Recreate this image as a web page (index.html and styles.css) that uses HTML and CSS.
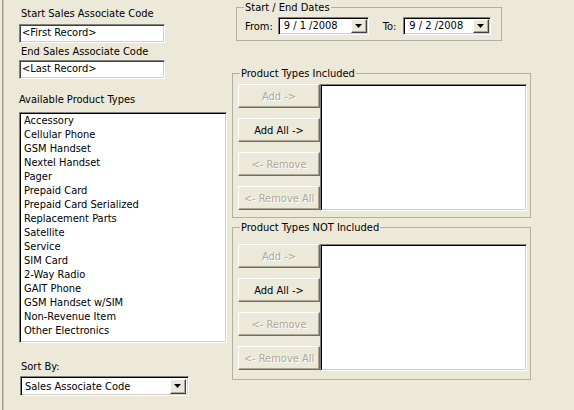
FILE: index.html
```html
<!DOCTYPE html>
<html>
<head>
<meta charset="utf-8">
<link rel="stylesheet" href="styles.css">
</head>
<body>
<div class="window">
  <div class="left">
    <div class="label l1">Start Sales Associate Code</div>
    <div class="textbox t1">&lt;First Record&gt;</div>
    <div class="label l2">End Sales Associate Code</div>
    <div class="textbox t2">&lt;Last Record&gt;</div>
    <div class="label l3">Available Product Types</div>
    <div class="listbox avail">
      <div class="item">Accessory</div>
      <div class="item">Cellular Phone</div>
      <div class="item">GSM Handset</div>
      <div class="item">Nextel Handset</div>
      <div class="item">Pager</div>
      <div class="item">Prepaid Card</div>
      <div class="item">Prepaid Card Serialized</div>
      <div class="item">Replacement Parts</div>
      <div class="item">Satellite</div>
      <div class="item">Service</div>
      <div class="item">SIM Card</div>
      <div class="item">2-Way Radio</div>
      <div class="item">GAIT Phone</div>
      <div class="item">GSM Handset w/SIM</div>
      <div class="item">Non-Revenue Item</div>
      <div class="item">Other Electronics</div>
    </div>
    <div class="label l4">Sort By:</div>
    <div class="combo sort">
      <span class="val">Sales Associate Code</span>
      <span class="dd"><svg width="7" height="4" viewBox="0 0 7 4"><path d="M0 0H7L3.5 4Z" fill="#000"/></svg></span>
    </div>
  </div>
  <div class="right">
    <fieldset class="group dates">
      <legend>Start / End Dates</legend>
      <div class="daterow">
        <span class="dlabel from">From:</span>
        <div class="combo date d1">
          <span class="val">9 / 1 /2008</span>
          <span class="dd"><svg width="7" height="4" viewBox="0 0 7 4"><path d="M0 0H7L3.5 4Z" fill="#000"/></svg></span>
        </div>
        <span class="dlabel to">To:</span>
        <div class="combo date d2">
          <span class="val">9 / 2 /2008</span>
          <span class="dd"><svg width="7" height="4" viewBox="0 0 7 4"><path d="M0 0H7L3.5 4Z" fill="#000"/></svg></span>
        </div>
      </div>
    </fieldset>
    <fieldset class="group types inc">
      <legend>Product Types Included</legend>
      <div class="typesrow">
        <div class="buttons">
          <div class="btn disabled">Add -&gt;</div>
          <div class="btn">Add All -&gt;</div>
          <div class="btn disabled">&lt;- Remove</div>
          <div class="btn disabled">&lt;- Remove All</div>
        </div>
        <div class="listbox side"></div>
      </div>
    </fieldset>
    <fieldset class="group types exc">
      <legend>Product Types NOT Included</legend>
      <div class="typesrow">
        <div class="buttons">
          <div class="btn disabled">Add -&gt;</div>
          <div class="btn">Add All -&gt;</div>
          <div class="btn disabled">&lt;- Remove</div>
          <div class="btn disabled">&lt;- Remove All</div>
        </div>
        <div class="listbox side"></div>
      </div>
    </fieldset>
  </div>
</div>
</body>
</html>
```

FILE: styles.css
```css
html, body {
  margin: 0;
  padding: 0;
}
body {
  background: #ece9d8;
  width: 574px;
  height: 410px;
  overflow: hidden;
  font-family: "DejaVu Sans Condensed", "DejaVu Sans", sans-serif;
  font-stretch: condensed;
  font-size: 11px;
  color: #000;
}
.window {
  display: flex;
  height: 410px;
  margin-left: 2px;
  border-left: 1px solid #9c9a8c;
  box-shadow: inset 1px 0 0 #c8c6b8;
}
.left {
  width: 213px;
  padding-left: 16px;
  display: flex;
  flex-direction: column;
  align-items: flex-start;
}
.label {
  line-height: 13px;
  height: 13px;
  white-space: nowrap;
}
.l1 { margin-top: 7px; padding-left: 2px; }
.l2 { margin-top: 2px; padding-left: 2px; }
.l3 { margin-top: 14px; }
.l4 { margin-top: 17px; padding-left: 2px; }

.textbox {
  box-sizing: border-box;
  width: 146px;
  height: 19px;
  background: #fff;
  border-top: 1px solid #808080;
  border-left: 1px solid #808080;
  border-right: 1px solid #fff;
  border-bottom: 1px solid #fff;
  box-shadow: inset 1px 1px 0 #404040, inset -1px -1px 0 #d4d0c8;
  padding-left: 2px;
  line-height: 16px;
  white-space: nowrap;
}
.t1 { margin-top: 4px; }
.t2 { margin-top: 2px; }
.listbox {
  box-sizing: border-box;
  background: #fff;
  border-top: 1px solid #808080;
  border-left: 1px solid #808080;
  border-right: 1px solid #fff;
  border-bottom: 1px solid #fff;
  box-shadow: inset 1px 1px 0 #000, inset -1px -1px 0 #d4d0c8;
}
.avail {
  margin-top: 6px;
  width: 208px;
  height: 231px;
  padding: 1px 0 0 4px;
}
.item {
  height: 14px;
  line-height: 14px;
  white-space: nowrap;
}
.combo {
  box-sizing: border-box;
  display: flex;
  align-items: center;
  justify-content: space-between;
  background: #fff;
  border-top: 1px solid #808080;
  border-left: 1px solid #808080;
  border-right: 1px solid #fff;
  border-bottom: 1px solid #fff;
  box-shadow: inset 1px 1px 0 #000, inset -1px -1px 0 #d4d0c8;
  padding: 2px 2px 2px 4px;
  white-space: nowrap;
}
.combo .val {
  line-height: 14px;
}
.dd {
  box-sizing: border-box;
  width: 16px;
  height: 15px;
  background: #ece9d8;
  border-top: 1px solid #fff;
  border-left: 1px solid #fff;
  border-right: 1px solid #404040;
  border-bottom: 1px solid #404040;
  box-shadow: inset -1px -1px 0 #aca899;
  display: flex;
  align-items: center;
  justify-content: center;
  padding-right: 1px;
}
.sort {
  margin-top: 3px;
  margin-left: 1px;
  width: 169px;
  height: 20px;
}
.sort .val { line-height: 15px; }

.right {
  display: flex;
  flex-direction: column;
  align-items: flex-start;
}
.group {
  box-sizing: border-box;
  margin: 0;
  padding: 0;
  border: 1px solid #b2b0a2;
  min-width: 0;
}
.group legend {
  padding: 0 1px;
  margin-left: 7px;
  line-height: 13px;
  height: 13px;
  white-space: nowrap;
}
.dates {
  margin-top: 1px;
  margin-left: 4px;
  width: 266px;
  height: 40px;
}
.daterow {
  display: flex;
  align-items: center;
  padding-left: 8px;
  margin-top: 3px;
}
.dlabel {
  line-height: 13px;
}
.d1 {
  margin-left: 5px;
  width: 91px;
  height: 18px;
  padding: 1px 1px 1px 5px;
}
.to { margin-left: 14px; }
.d2 {
  margin-left: 7px;
  width: 88px;
  height: 18px;
  padding: 1px 1px 1px 5px;
}
.date .dd { height: 14px; }
.types {
  width: 299px;
}
.inc {
  margin-top: 26px;
  height: 151px;
}
.exc {
  margin-top: 3px;
  height: 159px;
}
.typesrow {
  display: flex;
  padding-left: 5px;
}
.inc .typesrow { margin-top: 4px; }
.exc .typesrow { margin-top: 10px; }
.buttons {
  display: flex;
  flex-direction: column;
  gap: 10px;
}
.btn {
  box-sizing: border-box;
  width: 82px;
  height: 24px;
  background: #ece9d8;
  border-top: 1px solid #fff;
  border-left: 1px solid #fff;
  border-right: 1px solid #716f64;
  border-bottom: 1px solid #716f64;
  box-shadow: inset -1px -1px 0 #aca899;
  display: flex;
  align-items: center;
  justify-content: center;
  white-space: nowrap;
}
.btn.disabled {
  color: #aca899;
  text-shadow: 1px 1px 0 #fff;
}
.side {
  width: 207px;
  height: 127px;
}
```
